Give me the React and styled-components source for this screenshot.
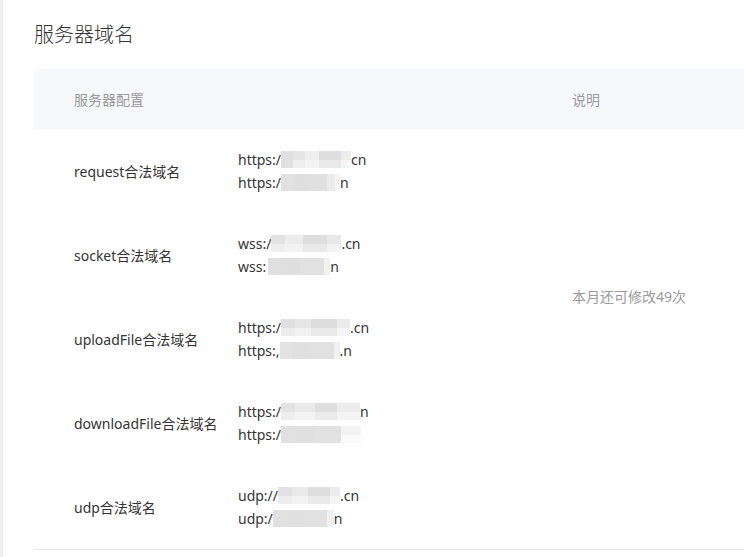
import React from "react";
import styled, { createGlobalStyle } from "styled-components";

const GlobalStyle = createGlobalStyle`
  html, body {
    margin: 0;
    padding: 0;
    background: #ffffff;
  }
  body {
    font-family: "Noto Sans", "Noto Sans CJK SC", sans-serif;
    color: #353535;
  }
`;

const Page = styled.div`
  min-height: 557px;
  border-left: 3px solid #efefef;
  padding: 20px 0 0 31px;
  box-sizing: border-box;
  overflow: hidden;
`;

const Title = styled.h2`
  margin: 0;
  font-size: 20px;
  font-weight: 300;
  line-height: 30px;
  color: #333333;
`;

const Table = styled.div`
  margin-top: 19px;
  width: 760px;
  display: grid;
  grid-template-columns: 204px 334px 1fr;
  grid-template-rows: 60px repeat(5, 84px);
  border-bottom: 1px solid #e7e7e7;
`;

const HeadCell = styled.div`
  background: #f7f8fa;
  display: flex;
  align-items: center;
  padding-left: ${(p) => p.$pad || 0}px;
  font-size: 14px;
  color: #9a9a9a;
`;

const LabelCell = styled.div`
  display: flex;
  align-items: center;
  padding-left: 40px;
  padding-bottom: 1px;
  font-size: 14px;
  color: #353535;
  white-space: nowrap;
`;

const UrlCell = styled.div`
  display: flex;
  flex-direction: column;
  justify-content: center;
  padding-bottom: 1px;
  font-size: 14px;
  line-height: 23px;
  color: #353535;
`;

const UrlLine = styled.div`
  display: flex;
  align-items: center;
  white-space: nowrap;
`;

const Masked = styled.span`
  display: inline-block;
  width: ${(p) => p.$w}px;
  height: 17px;
  flex: none;
`;

const NoteCell = styled.div`
  grid-row: 2 / span 4;
  grid-column: 3;
  display: flex;
  align-items: center;
  padding-bottom: 2px;
  font-size: 14px;
  color: #9a9a9a;
`;

// pixelated redaction block: horizontal run of grey tiles
function Mosaic({ tiles }) {
  const w = tiles.reduce((s, t) => s + t[0], 0);
  let x = 0;
  return (
    <Masked $w={w}>
      <svg width={w} height="17" viewBox={`0 0 ${w} 17`}>
        {tiles.map(([tw, c, c2], i) => {
          const el = (
            <g key={i}>
              <rect x={x} y="0" width={tw} height="9" fill={c} />
              <rect x={x} y="9" width={tw} height="8" fill={c2 || c} />
            </g>
          );
          x += tw;
          return el;
        })}
      </svg>
    </Masked>
  );
}

const rows = [
  {
    label: "request合法域名",
    lines: [
      ["https:/", [[12, "#e0e0e0"], [12, "#e4e4e4", "#eeeeee"], [14, "#eeeeee", "#f3f3f3"], [22, "#dedede", "#e9e9e9"], [10, "#ededed", "#f5f5f5"]], "cn"],
      ["https:/", [[14, "#e1e1e1"], [14, "#dfdfdf"], [18, "#e0e0e0"], [8, "#ebebeb"], [5, "#f6f6f6"]], "n"],
    ],
  },
  {
    label: "socket合法域名",
    lines: [
      ["wss:/", [[14, "#e2e2e2", "#eeeeee"], [18, "#ececec", "#f2f2f2"], [24, "#dedede", "#e9e9e9"], [14, "#e8e8e8", "#f3f3f3"]], ".cn"],
      ["wss:", [[2, "#ffffff"], [16, "#e0e0e0"], [16, "#dfdfdf"], [24, "#e1e1e1"], [6, "#f2f2f2"]], "n"],
    ],
  },
  {
    label: "uploadFile合法域名",
    lines: [
      ["https:/", [[14, "#e0e0e0", "#ededed"], [16, "#e6e6e6", "#f2f2f2"], [26, "#dddddd", "#e9e9e9"], [13, "#ebebeb", "#f4f4f4"]], ".cn"],
      ["https:,", [[12, "#e3e3e3"], [18, "#e0e0e0"], [24, "#e1e1e1"], [6, "#f1f1f1"]], ".n"],
    ],
  },
  {
    label: "downloadFile合法域名",
    lines: [
      ["https:/", [[14, "#e3e3e3", "#eeeeee"], [20, "#eaeaea", "#f3f3f3"], [22, "#dfdfdf", "#ebebeb"], [23, "#ececec", "#f4f4f4"]], "n"],
      ["https:/", [[14, "#e1e1e1"], [20, "#e0e0e0"], [26, "#e2e2e2"], [20, "#f3f3f3", "#fafafa"]], ""],
    ],
  },
  {
    label: "udp合法域名",
    lines: [
      ["udp://", [[14, "#e2e2e2", "#ededed"], [16, "#eaeaea", "#f3f3f3"], [22, "#dedede", "#eaeaea"], [10, "#ececec", "#f5f5f5"]], ".cn"],
      ["udp:/", [[14, "#e1e1e1"], [18, "#e0e0e0"], [22, "#e1e1e1"], [7, "#f1f1f1"]], "n"],
    ],
  },
];

export default function App() {
  return (
    <>
      <GlobalStyle />
      <Page>
        <Title>服务器域名</Title>
        <Table>
          <HeadCell $pad={40}>服务器配置</HeadCell>
          <HeadCell />
          <HeadCell>说明</HeadCell>
          {rows.map((r, i) => (
            <React.Fragment key={r.label}>
              <LabelCell style={{ gridRow: i + 2, gridColumn: 1 }}>{r.label}</LabelCell>
              <UrlCell style={{ gridRow: i + 2, gridColumn: 2 }}>
                {r.lines.map(([pre, tiles, suf], j) => (
                  <UrlLine key={j}>
                    {pre}
                    <Mosaic tiles={tiles} />
                    {suf}
                  </UrlLine>
                ))}
              </UrlCell>
            </React.Fragment>
          ))}
          <NoteCell>本月还可修改49次</NoteCell>
        </Table>
      </Page>
    </>
  );
}
